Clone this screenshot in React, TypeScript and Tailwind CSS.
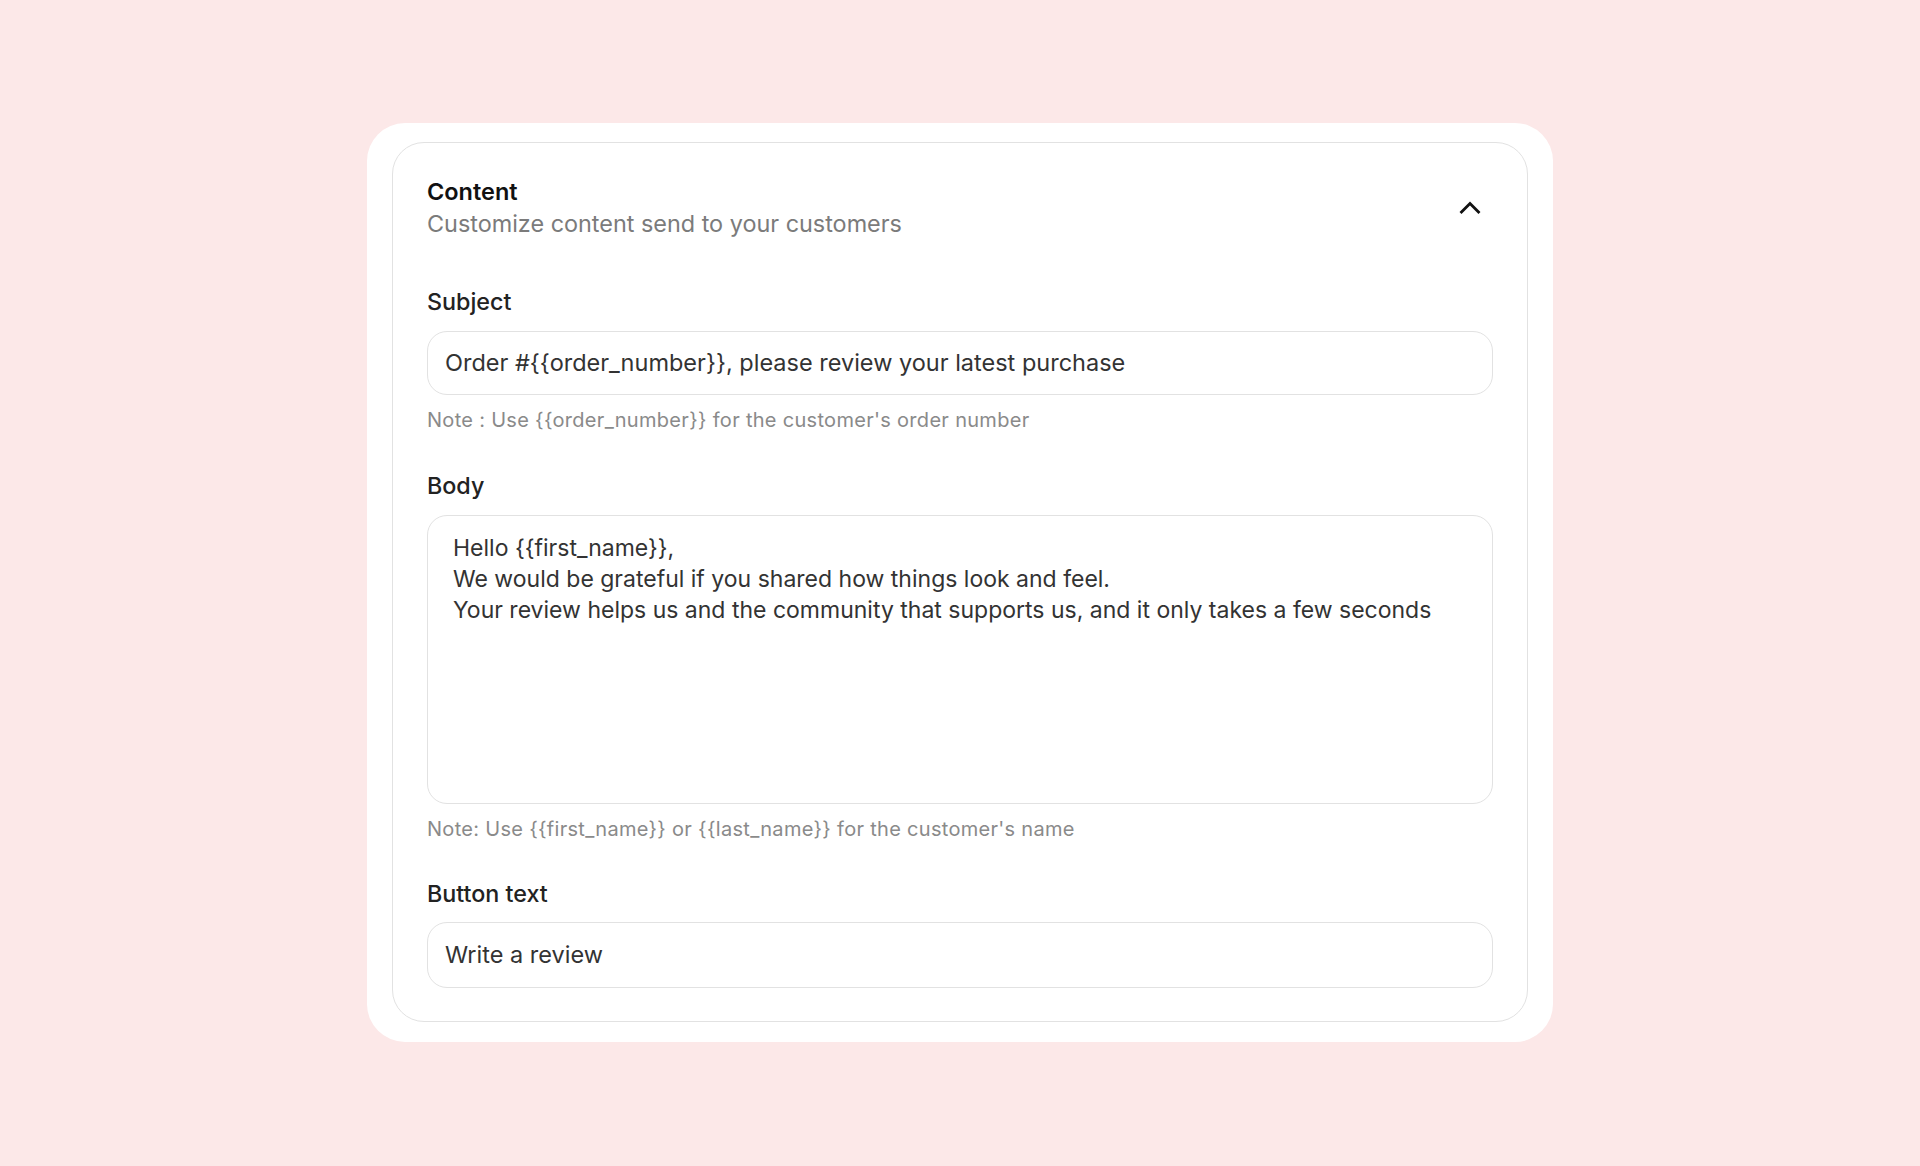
import React from "react";

export default function App() {
  const font = { fontFamily: "Inter, 'Noto Sans', sans-serif" };
  return (
    <div
      className="w-[1920px] h-[1166px] bg-[#fce8e8] flex justify-center items-start pt-[123px]"
      style={font}
    >
      <div className="w-[1186px] bg-white rounded-[38px] pt-[19px] pb-[20px] px-[25px]">
        <div className="border border-[#e2e2e2] rounded-[32px] pt-[33px] pb-[33px] px-[34px] flex flex-col">
          <div className="flex items-center justify-between">
            <div className="flex flex-col">
              <div className="text-[23.5px] leading-[32px] font-semibold text-[#111111]">Content</div>
              <div className="text-[23.4px] leading-[32px] text-[#7b7b7b]">
                Customize content send to your customers
              </div>
            </div>
            <svg width="24" height="24" viewBox="0 0 24 24" className="mr-[11px]" fill="none">
              <path d="M3.5 16 L12 7.5 L20.5 16" stroke="#111111" strokeWidth="2.8" strokeLinecap="square" strokeLinejoin="miter" />
            </svg>
          </div>

          <div className="mt-[47px] text-[23.3px] leading-[30px] font-medium text-[#222222]">Subject</div>
          <div className="mt-[14px] h-[64px] border border-[#e2e2e2] rounded-[20px] flex items-center pl-[17px] text-[23.5px] text-[#333333]">
            {"Order #{{order_number}}, please review your latest purchase"}
          </div>
          <div className="mt-[12px] text-[20px] tracking-[0.3px] leading-[26px] text-[#8a8a8a]">
            {"Note :  Use {{order_number}} for the customer's order number"}
          </div>

          <div className="mt-[38px] text-[23.3px] leading-[30px] font-medium text-[#222222]">Body</div>
          <div className="mt-[14px] h-[289px] border border-[#e2e2e2] rounded-[20px] pt-[17px] pl-[25px] text-[23px] leading-[31px] text-[#333333]">
            <div>{"Hello {{first_name}},"}</div>
            <div>We would be grateful if you shared how things look and feel.</div>
            <div>Your review helps us and the community that supports us, and it only takes a few seconds</div>
          </div>
          <div className="mt-[12px] text-[20px] tracking-[0.3px] leading-[26px] text-[#8a8a8a]">
            {"Note:  Use {{first_name}} or {{last_name}} for the customer's name"}
          </div>

          <div className="mt-[37px] text-[23.3px] leading-[30px] font-medium text-[#222222]">Button text</div>
          <div className="mt-[13px] h-[66px] border border-[#e2e2e2] rounded-[20px] flex items-center pl-[17px] text-[23.5px] text-[#333333]">
            Write a review
          </div>
        </div>
      </div>
    </div>
  );
}
